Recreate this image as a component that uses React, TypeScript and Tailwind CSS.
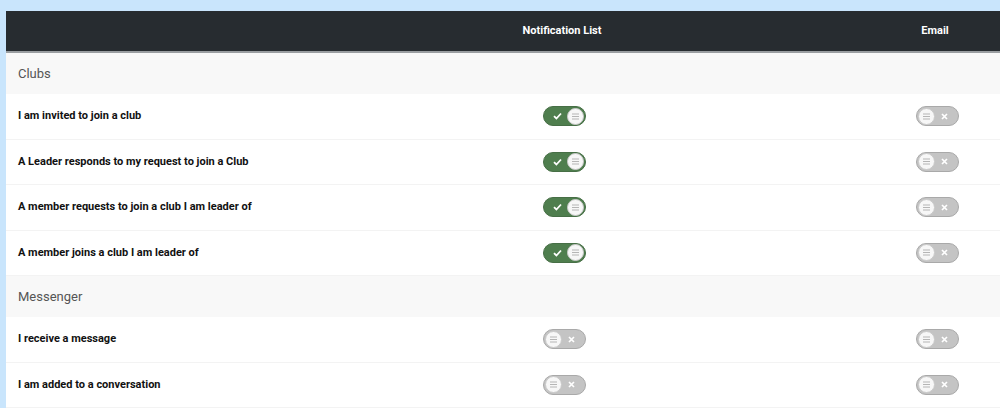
import React from 'react';

type Setting = { label: string; list: boolean; email: boolean };
type Section = { title: string; settings: Setting[] };

const sections: Section[] = [
  {
    title: 'Clubs',
    settings: [
      { label: 'I am invited to join a club', list: true, email: false },
      { label: 'A Leader responds to my request to join a Club', list: true, email: false },
      { label: 'A member requests to join a club I am leader of', list: true, email: false },
      { label: 'A member joins a club I am leader of', list: true, email: false },
    ],
  },
  {
    title: 'Messenger',
    settings: [
      { label: 'I receive a message', list: false, email: false },
      { label: 'I am added to a conversation', list: false, email: false },
    ],
  },
];

function Knob() {
  return (
    <span className="flex h-[17px] w-[17px] items-center justify-center rounded-full border border-[#c9c9c9] bg-[#f7f7f7]">
      <svg width="9" height="7" viewBox="0 0 9 7">
        <path d="M1 1h7M1 3.5h7M1 6h7" stroke="#b5b5b5" strokeWidth="1.1" />
      </svg>
    </span>
  );
}

function Toggle({ on }: { on: boolean }) {
  if (on) {
    return (
      <span className="flex h-[20px] w-[43px] items-center justify-between rounded-full border border-[#476f46] bg-[#4f7e4e] pl-[9px] pr-[1px]">
        <svg width="9" height="8" viewBox="0 0 9 8">
          <path d="M1 4.2l2.4 2.3L8 1.5" fill="none" stroke="#fff" strokeWidth="1.8" />
        </svg>
        <Knob />
      </span>
    );
  }
  return (
    <span className="flex h-[20px] w-[43px] items-center justify-between rounded-full border border-[#a9a9a9] bg-[#c4c4c4] pl-[1px] pr-[10px]">
      <Knob />
      <svg width="7" height="7" viewBox="0 0 7 7">
        <path d="M1 1l5 5M6 1L1 6" stroke="#fff" strokeWidth="1.7" />
      </svg>
    </span>
  );
}

const cols = 'grid grid-cols-[1fr_120px_253px_120px] pr-[5px] items-center';

export default function App() {
  return (
    <div className="h-[408px] w-[1000px] overflow-hidden bg-[#c9e5fc] pl-[6px] pt-[11px] font-['Roboto',sans-serif]">
      <div className="bg-white">
        {/* Column headings */}
        <div className={`${cols} h-[42px] border-b-2 border-[#9a9ea1] bg-[#272c30] text-[11px] font-bold text-white`}>
          <span />
          <span className="text-center">Notification List</span>
          <span />
          <span className="text-center">Email</span>
        </div>

        {sections.map((section) => (
          <div key={section.title}>
            <div className="flex h-[41px] items-center bg-[#f8f8f8] px-[12px] text-[13px] text-[#555]">
              {section.title}
            </div>
            {section.settings.map((s) => (
              <div
                key={s.label}
                className={`${cols} h-[45.5px] border-b border-[#f3f3f3] pl-[12px] text-[11px] font-bold text-[#111]`}
              >
                <span className="whitespace-nowrap">{s.label}</span>
                <span className="flex justify-center pl-[4px]">
                  <Toggle on={s.list} />
                </span>
                <span />
                <span className="flex justify-center pl-[4px]">
                  <Toggle on={s.email} />
                </span>
              </div>
            ))}
          </div>
        ))}
      </div>
    </div>
  );
}
